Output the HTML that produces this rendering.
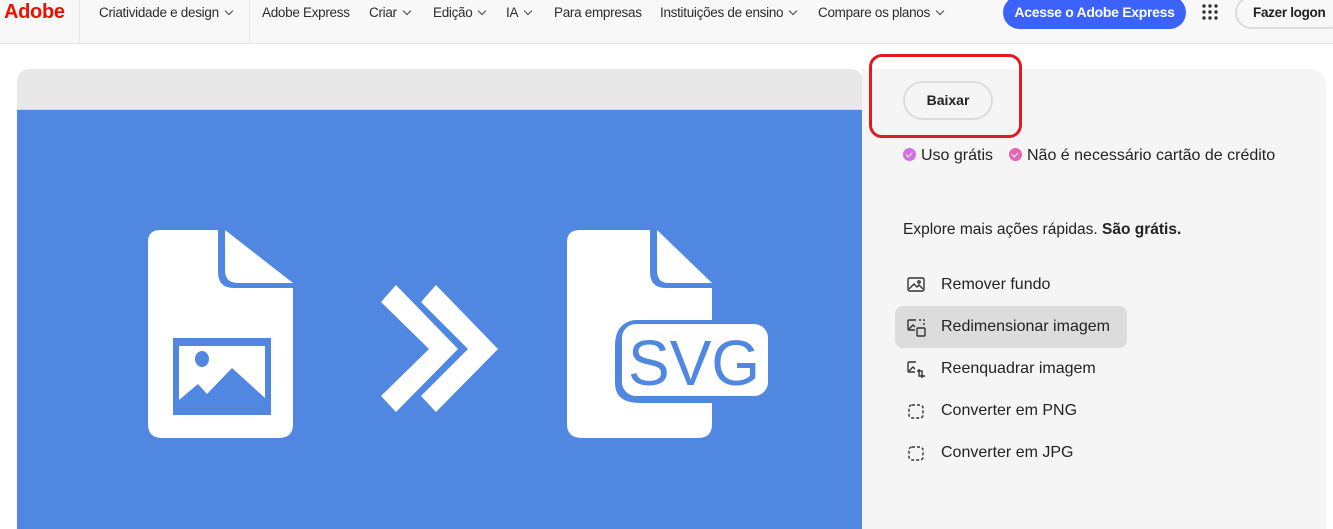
<!DOCTYPE html>
<html><head><meta charset="utf-8"><style>
*{margin:0;padding:0;box-sizing:border-box}
body{width:1333px;height:515px;overflow:hidden;background:#fff;font-family:"Liberation Sans",sans-serif;color:#222;position:relative}
.nav{position:absolute;left:0;top:0;width:1333px;height:44px;background:#f8f8f8;border-bottom:1px solid #e6e6e6}
.nav span{position:absolute;top:5px;font-size:13.5px;color:#2c2c2c;letter-spacing:-0.3px;white-space:nowrap}
.logo{position:absolute;left:4px;top:1px;font-weight:bold;color:#eb1000;font-size:20px;letter-spacing:-0.3px}
.sep{position:absolute;top:0;width:1px;height:43px;background:#e6e6e6}
.chev{display:inline-block;width:6px;height:6px;border-right:1px solid #444;border-bottom:1px solid #444;transform:rotate(45deg);margin-left:7px;position:relative;top:-3px}
.cta{position:absolute;left:1003px;top:-4px;width:183px;height:33px;border-radius:17px;background:#3b63fb;color:#fff;font-weight:bold;font-size:14px;text-align:center;line-height:33px;letter-spacing:-0.3px}
.login{position:absolute;left:1235px;top:-4px;width:110px;height:33px;border-radius:17px;border:2px solid #ddd;font-weight:bold;font-size:13.5px;line-height:29px;padding-left:16px;letter-spacing:-0.3px;color:#222}
.left{position:absolute;left:17px;top:69px;width:846px;height:460px;border-radius:12px 12px 0 0;overflow:hidden}
.left .bar{height:41px;background:#e8e8e8;border-bottom:1px solid #d5d5d5}
.left .blue{height:420px;background:#5087e0;position:relative}
.right{position:absolute;left:862px;top:69px;width:464px;height:460px;background:#f5f5f5;border-radius:0 16px 0 0}
.red{position:absolute;left:869px;top:54px;width:153px;height:84px;border:3px solid #e01b22;border-radius:13px}
.baixar{position:absolute;left:903px;top:81px;width:90px;height:39px;border:2px solid #dcdcdc;border-radius:20px;font-weight:bold;font-size:14px;text-align:center;line-height:35px;background:#f5f5f5}
.chk{position:absolute;top:147px;font-size:16px;color:#222;white-space:nowrap}
.dot{display:inline-block;width:13px;height:13px;border-radius:50%;background:#d16ee8;vertical-align:-1px;margin-right:5px;position:relative}
.dot:after{content:"";position:absolute;left:4px;top:3px;width:3px;height:5px;border-right:1.5px solid #fff;border-bottom:1.5px solid #fff;transform:rotate(45deg)}
.ex{position:absolute;left:903px;top:221px;font-size:15.5px}
.item{position:absolute;left:895px;width:232px;height:42px;border-radius:8px;font-size:16px;line-height:42px;padding-left:46px}
.item svg{position:absolute;left:12px;top:13px}
</style></head><body>
<div class="nav">
<div class="logo">Adobe</div>
<div class="sep" style="left:79px"></div>
<span style="left:99px">Criatividade e design<i class="chev"></i></span>
<div class="sep" style="left:249px"></div>
<span style="left:262px">Adobe Express</span>
<span style="left:369px">Criar<i class="chev"></i></span>
<span style="left:433px">Edição<i class="chev"></i></span>
<span style="left:506px">IA<i class="chev"></i></span>
<span style="left:554px">Para empresas</span>
<span style="left:660px">Instituições de ensino<i class="chev"></i></span>
<span style="left:818px">Compare os planos<i class="chev"></i></span>
<div class="cta">Acesse o Adobe Express</div>
<svg style="position:absolute;left:1202px;top:4px" width="16" height="16"><g fill="#333"><circle cx="2" cy="2" r="1.7"/><circle cx="8" cy="2" r="1.7"/><circle cx="14" cy="2" r="1.7"/><circle cx="2" cy="8" r="1.7"/><circle cx="8" cy="8" r="1.7"/><circle cx="14" cy="8" r="1.7"/><circle cx="2" cy="14" r="1.7"/><circle cx="8" cy="14" r="1.7"/><circle cx="14" cy="14" r="1.7"/></g></svg>
<div class="login">Fazer logon</div>
</div>
<div class="left"><div class="bar"></div><div class="blue">
<svg width="846" height="420" style="position:absolute;left:0;top:0">
<g transform="translate(-17,-110)">
<path d="M160 230 H218 V272 Q218 288 234 288 H293 V424 Q293 438 279 438 H162 Q148 438 148 424 V242 Q148 230 160 230Z" fill="#fff"/>
<path d="M225 230 L293 283 H238 Q225 283 225 270Z" fill="#fff"/>
<rect x="173" y="338" width="98" height="77" fill="#5087e0"/>
<rect x="179" y="346" width="86" height="63" fill="#fff"/>
<path d="M179 400 L198 384 L207 394 L232 368 L265 398 V409 H179Z" fill="#5087e0"/>
<ellipse cx="202" cy="359" rx="7" ry="8" fill="#5087e0"/>
<path d="M396 285 L458 349 L396 412 L381 396 L429 349 L381 302Z" fill="#fff"/>
<path d="M436 285 L498 349 L436 412 L421 396 L468 349 L421 302Z" fill="#fff"/>
<path d="M580 230 H650 V272 Q650 288 666 288 H712 V320 H640 Q615 320 615 346 V383 Q615 403 640 403 H712 V424 Q712 438 698 438 H582 Q567 438 567 424 V242 Q567 230 580 230Z" fill="#fff"/>
<path d="M657 230 L712 283 H668 Q657 283 657 270Z" fill="#fff"/>
<rect x="620" y="322" width="150" height="76" rx="16" fill="#fff" stroke="#5087e0" stroke-width="4"/>
<text x="628" y="385" font-family="Liberation Sans" font-size="64" fill="#5087e0" textLength="132" lengthAdjust="spacingAndGlyphs">SVG</text>
</g></svg>
</div></div>
<div class="right"></div>
<div class="red"></div>
<div class="baixar">Baixar</div>
<div class="chk" style="left:903px"><i class="dot"></i>Uso grátis</div>
<div class="chk" style="left:1009px"><i class="dot" style="background:#e664b8"></i>Não é necessário cartão de crédito</div>
<div class="ex">Explore mais ações rápidas. <b>São grátis.</b></div>
<div class="item" style="top:264px"><svg width="18" height="16" fill="none" stroke="#333" stroke-width="1.4"><rect x="1" y="1" width="16" height="13" rx="1.5"/><path d="M2 12 L7 7 L10 10 L12 8 L16 12"/><circle cx="12" cy="5" r="1.2"/></svg>Remover fundo</div>
<div class="item" style="top:306px;background:#dcdcdc">
<svg width="20" height="18" fill="none" stroke="#333" stroke-width="1.4"><path d="M9 1 H2 Q1 1 1 2 V10 Q1 11 2 11 H8"/><path d="M2 10 L6 6 L8 8"/><rect x="10" y="9" width="8" height="8" rx="1"/><path d="M12 1 h5 v5" stroke-dasharray="2 2"/></svg>Redimensionar imagem</div>
<div class="item" style="top:348px"><svg width="20" height="18" fill="none" stroke="#333" stroke-width="1.4"><path d="M9 1 H2 Q1 1 1 2 V10 Q1 11 2 11 H8"/><path d="M2 10 L6 6 L8 8"/><path d="M12 8 V15 H18 M10 10 H15 V17"/></svg>Reenquadrar imagem</div>
<div class="item" style="top:390px"><svg width="18" height="18" fill="none" stroke="#333" stroke-width="1.4" stroke-dasharray="3 2"><rect x="2" y="2" width="14" height="13" rx="3"/></svg>Converter em PNG</div>
<div class="item" style="top:432px"><svg width="18" height="18" fill="none" stroke="#333" stroke-width="1.4" stroke-dasharray="3 2"><rect x="2" y="2" width="14" height="13" rx="3"/></svg>Converter em JPG</div>
</body></html>
